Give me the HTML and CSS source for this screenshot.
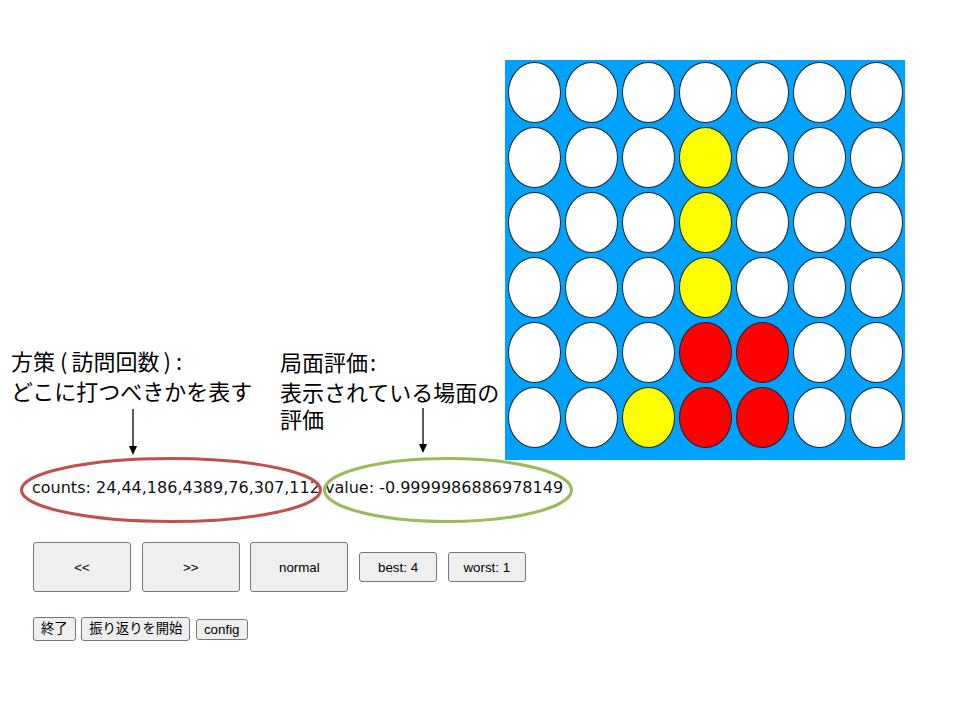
FILE: index.html
```html
<!DOCTYPE html>
<html lang="ja">
<head>
<meta charset="utf-8">
<title>Connect Four review</title>
<link rel="stylesheet" href="styles.css">
</head>
<body>
<div class="app">
  <div class="board">
    <div class="cell"></div><div class="cell"></div><div class="cell"></div><div class="cell"></div><div class="cell"></div><div class="cell"></div><div class="cell"></div>
    <div class="cell"></div><div class="cell"></div><div class="cell"></div><div class="cell yellow"></div><div class="cell"></div><div class="cell"></div><div class="cell"></div>
    <div class="cell"></div><div class="cell"></div><div class="cell"></div><div class="cell yellow"></div><div class="cell"></div><div class="cell"></div><div class="cell"></div>
    <div class="cell"></div><div class="cell"></div><div class="cell"></div><div class="cell yellow"></div><div class="cell"></div><div class="cell"></div><div class="cell"></div>
    <div class="cell"></div><div class="cell"></div><div class="cell"></div><div class="cell red"></div><div class="cell red"></div><div class="cell"></div><div class="cell"></div>
    <div class="cell"></div><div class="cell"></div><div class="cell yellow"></div><div class="cell red"></div><div class="cell red"></div><div class="cell"></div><div class="cell"></div>
  </div>
  <div class="info">counts: 24,44,186,4389,76,307,112 value: -0.9999986886978149</div>
  <div class="controls">
    <button class="btn big">&lt;&lt;</button>
    <button class="btn big">&gt;&gt;</button>
    <button class="btn big">normal</button>
    <button class="btn mid">best: 4</button>
    <button class="btn mid">worst: 1</button>
  </div>
  <div class="actions">
    <button class="btn small ja">終了</button>
    <button class="btn small ja">振り返りを開始</button>
    <button class="btn small">config</button>
  </div>
</div>

<div class="note note-policy">
  <div class="note-title">方策<span class="paren open">(</span>訪問回数<span class="paren close">)</span><span class="colon">:</span></div>
  <div class="note-body">どこに打つべきかを表す</div>
</div>
<div class="note note-value">
  <div class="note-title">局面評価<span class="colon">:</span></div>
  <div class="note-body wrap">表示されている場面の評価</div>
</div>

<svg class="overlay" width="960" height="720" viewBox="0 0 960 720" aria-hidden="true">
  <line x1="133" y1="409" x2="133" y2="448" stroke="#000" stroke-width="1.3"/>
  <polygon points="129,446 137,446 133,455" fill="#000"/>
  <line x1="423" y1="408" x2="423" y2="446" stroke="#000" stroke-width="1.3"/>
  <polygon points="419,444 427,444 423,453" fill="#000"/>
  <ellipse cx="171" cy="490" rx="149.5" ry="31.5" fill="none" stroke="#c0504d" stroke-width="3"/>
  <ellipse cx="448" cy="490" rx="123.5" ry="31.5" fill="none" stroke="#9bbb59" stroke-width="3"/>
</svg>
</body>
</html>
```

FILE: styles.css
```css
html, body {
  margin: 0;
  padding: 0;
  background: #ffffff;
  width: 960px;
  height: 720px;
  overflow: hidden;
}

body {
  position: relative;
  color: #000;
}

.app {
  padding: 60px 0 0 33px;
}

.board {
  margin-left: 472px;
  width: 400px;
  height: 400px;
  background: #00a2ff;
  display: flex;
  flex-wrap: wrap;
  align-content: flex-start;
  padding-left: 0.5px;
  box-sizing: border-box;
}

.cell {
  width: 53px;
  height: 61px;
  margin: 2px;
  box-sizing: border-box;
  border: 1.5px solid #222;
  border-radius: 50%;
  background: #ffffff;
}

.cell.yellow { background: #ffff00; }
.cell.red { background: #ff0000; }

.info {
  margin-top: 18px;
  margin-left: -1px;
  font-family: "DejaVu Sans", Verdana, sans-serif;
  font-size: 16px;
  line-height: 19px;
  height: 19px;
  white-space: nowrap;
  color: #111;
}

.controls {
  margin-top: 45px;
  display: flex;
  align-items: center;
  gap: 10.7px;
}

.actions {
  margin-top: 25px;
  display: flex;
  align-items: center;
  gap: 5.5px;
}

.btn {
  font-family: "Liberation Sans", Arial, "Noto Sans CJK JP", sans-serif;
  font-size: 13.33px;
  color: #000;
  background: #efefef;
  border: 1px solid #767676;
  border-radius: 3px;
  padding: 1px 6px;
  box-sizing: border-box;
  margin: 0;
}

.btn.big {
  width: 98px;
  height: 50px;
}

.btn.mid {
  width: 78px;
  height: 30px;
}

.btn.small {
  height: 21px;
  padding: 0 7px;
  line-height: 17px;
}

.btn.small.ja {
  height: 24px;
  line-height: 20px;
}

.note {
  position: absolute;
  font-family: "Noto Sans CJK JP", "Noto Sans", sans-serif;
  font-size: 22px;
  color: #000;
  white-space: nowrap;
}

.note-title {
  line-height: 30px;
}

.note-body {
  line-height: 30px;
}

.colon {
  padding-left: 2px;
}

.paren.open {
  padding: 0 4px 0 5px;
}

.paren.close {
  padding: 0 3px 0 4px;
}

.note-policy {
  left: 11px;
  top: 345px;
}

.note-value {
  left: 280px;
  top: 346px;
}

.note-body.wrap {
  white-space: normal;
  width: 224px;
  line-height: 26.5px;
  margin-top: 2px;
}

.overlay {
  position: absolute;
  left: 0;
  top: 0;
  pointer-events: none;
}
```
